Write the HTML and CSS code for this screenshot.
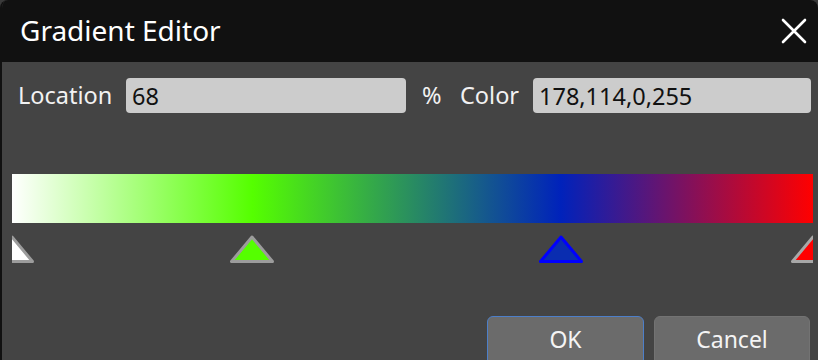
FILE: index.html
```html
<!DOCTYPE html>
<html lang="en">
<head>
  <meta charset="UTF-8">
  <meta name="viewport" content="width=device-width, initial-scale=1.0">
  <title>Gradient Editor</title>
  <link rel="stylesheet" href="styles.css">
</head>
<body>
  <div class="dialog">
    <div class="title-bar">
      <span class="title">Gradient Editor</span>
      <button class="close-button" aria-label="Close">
        <svg width="26" height="26" viewBox="0 0 26 26">
          <path d="M2 2 L24 24 M24 2 L2 24" stroke="#fff" stroke-width="2.6" stroke-linecap="round"/>
        </svg>
      </button>
    </div>

    <div class="content">
      <div class="field-row">
        <label class="field-label" for="location">Location</label>
        <input class="field-input" id="location" type="text" value="68">
        <span class="field-label percent">%</span>
        <label class="field-label" for="color">Color</label>
        <input class="field-input" id="color" type="text" value="178,114,0,255">
      </div>

      <div class="gradient-bar"></div>

      <!-- Gradient stops -->
      <div class="stop-track">
        <svg class="stop" style="left: 0%" viewBox="0 0 44 28">
          <polygon points="22,2 1.5,26.5 42.5,26.5" fill="#ffffff" stroke="#9c9c9c" stroke-width="3" stroke-linejoin="round"/>
        </svg>
        <svg class="stop" style="left: 30%" viewBox="0 0 44 28">
          <polygon points="22,2 1.5,26.5 42.5,26.5" fill="#55ff00" stroke="#9c9c9c" stroke-width="3" stroke-linejoin="round"/>
        </svg>
        <svg class="stop" style="left: 68.5%" viewBox="0 0 44 28">
          <polygon points="22,2 1.5,26.5 42.5,26.5" fill="#0a2db0" stroke="#0000ff" stroke-width="3" stroke-linejoin="round"/>
        </svg>
        <svg class="stop" style="left: 100%" viewBox="0 0 44 28">
          <polygon points="22,2 1.5,26.5 42.5,26.5" fill="#ff0000" stroke="#a8a8a8" stroke-width="3" stroke-linejoin="round"/>
        </svg>
      </div>

      <div class="button-row">
        <button class="dialog-button ok-button">OK</button>
        <button class="dialog-button">Cancel</button>
      </div>
    </div>
  </div>
</body>
</html>
```

FILE: styles.css
```css
body {
  font-family: "Noto Sans", "Open Sans", sans-serif;
  margin: 0;
  padding: 0;
  background-color: #3a3a3a;
  overflow: hidden;
}

.dialog {
  width: 818px;
  height: 360px;
  background-color: #444444;
  border-left: 2px solid #111111;
  box-sizing: border-box;
  border-radius: 8px 8px 0 0;
  overflow: hidden;
}

.title-bar {
  height: 62px;
  background-color: #111111;
  display: flex;
  align-items: center;
  justify-content: space-between;
  padding: 0 11px 0 18px;
}

.title {
  color: #ffffff;
  font-size: 28px;
  line-height: 1;
  margin-top: -2px;
}

.close-button {
  background: none;
  border: none;
  padding: 0;
  width: 26px;
  height: 26px;
  cursor: pointer;
  margin-top: -1px;
}

.close-button svg {
  display: block;
}

.content {
  padding-top: 16px;
}

.field-row {
  display: grid;
  grid-template-columns: 108px 280px 54px 73px 278px;
  align-items: center;
  height: 35px;
  padding-left: 16px;
}

.field-label {
  color: #f2f2f2;
  font-size: 23.5px;
  line-height: 1;
}

.percent {
  padding-left: 16px;
}

.field-input {
  box-sizing: border-box;
  height: 35px;
  width: 100%;
  background-color: #cccccc;
  border: none;
  border-radius: 4px;
  padding: 0 6px;
  font-family: inherit;
  font-size: 23.5px;
  color: #111111;
  outline: none;
}

.gradient-bar {
  margin: 61px 0 0 10px;
  width: 801px;
  height: 49px;
  background: linear-gradient(to right, #ffffff 0%, #55ff00 30%, #0022bb 68.5%, #ff0000 100%);
}

.stop-track {
  position: relative;
  margin: 12px 0 0 10px;
  width: 801px;
  height: 28px;
  overflow: hidden;
}

.stop {
  position: absolute;
  top: 0;
  width: 44px;
  height: 28px;
  margin-left: -22px;
}

.button-row {
  display: flex;
  justify-content: flex-end;
  gap: 10px;
  margin-top: 53px;
  padding-right: 8px;
}

.dialog-button {
  box-sizing: border-box;
  width: 156px;
  height: 50px;
  background-color: #6b6b6b;
  border: 1px solid #737373;
  border-radius: 6px;
  color: #f4f4f4;
  font-family: inherit;
  font-size: 23px;
  padding: 0 0 4px 0;
  cursor: pointer;
}

.ok-button {
  width: 157px;
  border-color: #4d7fc9;
}
```
